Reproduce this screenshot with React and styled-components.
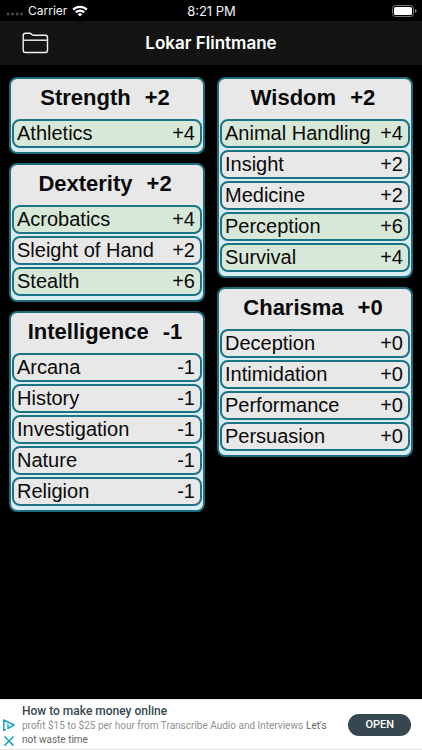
import React from 'react'
import styled, { createGlobalStyle } from 'styled-components'

const GlobalStyle = createGlobalStyle`
  * {
    box-sizing: border-box;
  }
  body {
    margin: 0;
    background: #000;
  }
`

const Screen = styled.div`
  display: flex;
  flex-direction: column;
  min-height: 100vh;
  font-family: 'Liberation Sans', Arial, sans-serif;
`

const StatusBar = styled.div`
  display: grid;
  grid-template-columns: 1fr auto 1fr;
  align-items: center;
  height: 21px;
  padding: 0 5px 0 6px;
  color: #f4f4f4;
  font-family: Inter, sans-serif;
  font-size: 12px;
  line-height: 20px;
`

const StatusGroup = styled.div`
  display: flex;
  align-items: center;
  gap: 5px;
  justify-content: ${props => (props.$end ? 'flex-end' : 'flex-start')};
`

const Clock = styled.time`
  font-size: 13px;
`

const NavBar = styled.header`
  display: grid;
  grid-template-columns: 1fr auto 1fr;
  align-items: center;
  height: 44px;
  padding: 0 22px;
  background: #141414;
`

const NavButton = styled.button`
  display: flex;
  justify-self: start;
  padding: 0;
  border: 0;
  background: none;
  color: #f4f4f4;
`

const NavTitle = styled.h1`
  margin: 0;
  color: #fff;
  font-family: Inter, sans-serif;
  font-size: 17px;
  font-weight: 600;
  line-height: 24px;
`

const Board = styled.main`
  display: grid;
  grid-template-columns: 1fr 1fr;
  align-items: start;
  gap: 12px;
  padding: 12px 9px;
`

const Column = styled.div`
  display: flex;
  flex-direction: column;
  gap: 9px;
`

const Card = styled.section`
  padding: 0 1px 4px;
  border: 2px solid #1c6c7e;
  border-radius: 8px;
  background: linear-gradient(#e8e8e8 40px, #d9ecef 40px);
  color: #0a0a0a;
`

const CardHeader = styled.h2`
  display: flex;
  justify-content: center;
  gap: 14px;
  margin: 0;
  padding: 0 4px 2px 0;
  font-size: 22px;
  font-weight: bold;
  line-height: 38px;
`

const SkillList = styled.ul`
  display: flex;
  flex-direction: column;
  gap: 2px;
  margin: 0;
  padding: 0;
  list-style: none;
`

const Skill = styled.li`
  display: flex;
  justify-content: space-between;
  padding: 0 5px 0 3px;
  border: 2px solid #1c7386;
  border-radius: 8px;
  background: ${props => (props.$proficient ? '#d8e8d8' : '#e8e8e8')};
  font-size: 20px;
  line-height: 25px;
  white-space: nowrap;
`

const Ad = styled.aside`
  display: flex;
  align-items: center;
  gap: 3px;
  min-height: 51px;
  margin-top: auto;
  padding: 0 11px 0 3px;
  border: 1px solid #e4e4e4;
  border-width: 1px 0;
  background: #fff;
  font-family: Roboto, sans-serif;
`

const AdControls = styled.div`
  display: flex;
  flex-direction: column;
  align-self: flex-end;
  gap: 5px;
  padding-bottom: 3px;
`

const AdControl = styled.button`
  display: flex;
  padding: 0;
  border: 0;
  background: none;
  color: #1ba3c6;
`

const AdCopy = styled.div`
  flex: 1;
  padding-left: 4px;
`

const AdTitle = styled.div`
  color: #37474f;
  font-size: 12px;
  font-weight: 500;
  line-height: 16px;
`

const AdText = styled.div`
  display: flex;
  gap: 3px;
  color: ${props => (props.$dark ? '#666' : '#909090')};
  font-size: 10px;
  line-height: 14px;
`

const AdTextEnd = styled.span`
  color: #666;
`

const AdButton = styled.a`
  padding: 0 17px;
  border-radius: 11px;
  background: #37474f;
  color: #fff;
  font-size: 11px;
  font-weight: 500;
  line-height: 22px;
  text-decoration: none;
`

const columns = [
  [
    {
      name: 'Strength',
      modifier: '+2',
      skills: [{ name: 'Athletics', bonus: '+4', proficient: true }],
    },
    {
      name: 'Dexterity',
      modifier: '+2',
      skills: [
        { name: 'Acrobatics', bonus: '+4', proficient: true },
        { name: 'Sleight of Hand', bonus: '+2' },
        { name: 'Stealth', bonus: '+6', proficient: true },
      ],
    },
    {
      name: 'Intelligence',
      modifier: '-1',
      skills: [
        { name: 'Arcana', bonus: '-1' },
        { name: 'History', bonus: '-1' },
        { name: 'Investigation', bonus: '-1' },
        { name: 'Nature', bonus: '-1' },
        { name: 'Religion', bonus: '-1' },
      ],
    },
  ],
  [
    {
      name: 'Wisdom',
      modifier: '+2',
      skills: [
        { name: 'Animal Handling', bonus: '+4', proficient: true },
        { name: 'Insight', bonus: '+2' },
        { name: 'Medicine', bonus: '+2' },
        { name: 'Perception', bonus: '+6', proficient: true },
        { name: 'Survival', bonus: '+4', proficient: true },
      ],
    },
    {
      name: 'Charisma',
      modifier: '+0',
      skills: [
        { name: 'Deception', bonus: '+0' },
        { name: 'Intimidation', bonus: '+0' },
        { name: 'Performance', bonus: '+0' },
        { name: 'Persuasion', bonus: '+0' },
      ],
    },
  ],
]

const SignalIcon = () => (
  <svg width="17" height="12" viewBox="0 0 17 12" fill="#4c4c4c">
    <circle cx="2" cy="9" r="1.4" />
    <circle cx="6.6" cy="9" r="1.4" />
    <circle cx="11.2" cy="9" r="1.4" />
    <circle cx="15.6" cy="9" r="1.4" />
  </svg>
)

const WifiIcon = () => (
  <svg width="16" height="12" viewBox="0 0 16 12" fill="none" stroke="#fff" strokeWidth="2.3">
    <path d="M1.2 4.6a9.7 9.7 0 0 1 13.6 0" />
    <path d="M3.9 7.4a5.9 5.9 0 0 1 8.2 0" />
    <path d="M8 11.6 5.7 9.3a3.3 3.3 0 0 1 4.6 0z" fill="#fff" stroke="none" />
  </svg>
)

const BatteryIcon = () => (
  <svg width="25" height="12" viewBox="0 0 25 12">
    <rect x="0.5" y="0.5" width="21" height="11" rx="3" fill="none" stroke="#777" />
    <rect x="2" y="2" width="18" height="8" rx="1.6" fill="#fff" />
    <path d="M23 4v4c1-.3 1.6-1.1 1.6-2S24 4.3 23 4z" fill="#777" />
  </svg>
)

const FolderIcon = () => (
  <svg width="27" height="22" viewBox="0 0 27 22" fill="none" stroke="currentColor" strokeWidth="1.4">
    <path d="M1.2 18.2V3.6Q1.2 1.3 3.5 1.3H7.6Q8.7 1.3 9.5 2.2T11.4 3.2H23.2Q25.5 3.2 25.5 5.5V18.2Q25.5 20.5 23.2 20.5H3.5Q1.2 20.5 1.2 18.2z" />
    <path d="M1.2 8.2H25.5" />
  </svg>
)

const AdChoicesIcon = () => (
  <svg width="12" height="12" viewBox="0 0 12 12" fill="none" stroke="currentColor" strokeWidth="1.5">
    <path d="M3 10.4.8 11.2V.9L11.2 6 5 9.4V5.2" strokeLinejoin="round" />
    <path d="M5 2.9v1.4" />
  </svg>
)

const CloseIcon = () => (
  <svg width="12" height="10" viewBox="0 0 12 10" fill="none" stroke="currentColor" strokeWidth="1.6">
    <path d="M1.5.5 10.5 9.5M10.5.5 1.5 9.5" />
  </svg>
)

const AbilityCard = ({ ability }) => (
  <Card>
    <CardHeader>
      <span>{ability.name}</span>
      <span>{ability.modifier}</span>
    </CardHeader>
    <SkillList>
      {ability.skills.map(skill => (
        <Skill key={skill.name} $proficient={skill.proficient}>
          <span>{skill.name}</span>
          <span>{skill.bonus}</span>
        </Skill>
      ))}
    </SkillList>
  </Card>
)

const App = () => (
  <Screen>
    <GlobalStyle />
    <StatusBar>
      <StatusGroup>
        <SignalIcon />
        <span>Carrier</span>
        <WifiIcon />
      </StatusGroup>
      <Clock>8:21 PM</Clock>
      <StatusGroup $end>
        <BatteryIcon />
      </StatusGroup>
    </StatusBar>
    <NavBar>
      <NavButton aria-label="Characters">
        <FolderIcon />
      </NavButton>
      <NavTitle>Lokar Flintmane</NavTitle>
    </NavBar>
    <Board>
      {columns.map((abilities, index) => (
        <Column key={index}>
          {abilities.map(ability => (
            <AbilityCard key={ability.name} ability={ability} />
          ))}
        </Column>
      ))}
    </Board>
    <Ad>
      <AdControls>
        <AdControl aria-label="About this ad">
          <AdChoicesIcon />
        </AdControl>
        <AdControl aria-label="Close ad">
          <CloseIcon />
        </AdControl>
      </AdControls>
      <AdCopy>
        <AdTitle>How to make money online</AdTitle>
        <AdText>
          <span>profit $15 to $25 per hour from Transcribe Audio and Interviews</span>
          <AdTextEnd>Let's</AdTextEnd>
        </AdText>
        <AdText $dark>not waste time</AdText>
      </AdCopy>
      <AdButton href="#open">OPEN</AdButton>
    </Ad>
  </Screen>
)

export default App
